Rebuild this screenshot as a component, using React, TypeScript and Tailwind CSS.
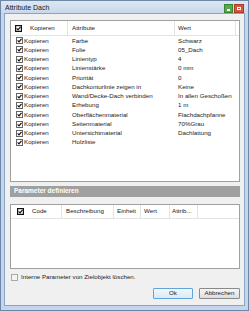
import React from "react";

const rows: [string, string][] = [
  ["Farbe", "Schwarz"],
  ["Folie", "05_Dach"],
  ["Linientyp", "4"],
  ["Linienstärke", "0 mm"],
  ["Priorität", "0"],
  ["Dachkonturlinie zeigen in", "Keine"],
  ["Wand/Decke-Dach verbinden", "In allen Geschoßen"],
  ["Erhebung", "1 m"],
  ["Oberflächenmaterial", "Flachdachpfanne"],
  ["Seitenmaterial", "70%Grau"],
  ["Untersichtmaterial", "Dachlattung"],
  ["Holzliste", ""],
];

function Check({ strong = false, checked = true }: { strong?: boolean; checked?: boolean }) {
  return (
    <svg width="7" height="7" viewBox="0 0 7 7" className="shrink-0 block">
      <rect
        x="0.5"
        y="0.5"
        width="6"
        height="6"
        fill={checked ? "#ffffff" : "#f4f4f4"}
        stroke={strong ? "#111111" : checked ? "#666666" : "#a8a8a8"}
        strokeWidth={strong ? 1.4 : 1}
      />
      {checked && (
        <path d="M1.6 3.4 L3 4.9 L5.5 1.8" fill="none" stroke="#111111" strokeWidth="1.2" />
      )}
    </svg>
  );
}

export default function App() {
  return (
    <div
      className="w-[249px] h-[311px] bg-[#c3d6ec] border border-[#6e87a6] flex flex-col text-[#222]"
      style={{ fontFamily: '"Liberation Sans", Arial, sans-serif' }}
    >
      {/* Title bar */}
      <div className="h-[12px] flex items-center pl-[4px] pr-[4px] bg-gradient-to-b from-[#dde7f2] to-[#c7d8ec]">
        <span className="text-[7px] text-[#1a1a1a] leading-none">Attribute Dach</span>
        <div className="ml-auto flex gap-[1px] mt-[2px]">
          <div className="w-[9px] h-[9px] bg-[#4fae4a] border border-[#3a8236] flex items-end justify-center pb-[1px]">
            <div className="w-[3px] h-[2px] bg-white" />
          </div>
          <div className="w-[10px] h-[9px] bg-[#d8553d] border border-[#a53b28] flex items-center justify-center">
            <div className="w-[4px] h-[3px] border border-white" />
          </div>
        </div>
      </div>

      {/* Client area */}
      <div className="mx-[3px] mb-[4px] flex-1 bg-[#f0f0f0] border border-[#8aa4c4] flex flex-col pl-[5px] pr-[4px] pt-[6px]">
        {/* First list */}
        <div className="h-[162px] bg-white border border-[#a0a0a0] flex flex-col text-[6.2px] leading-none">
          <div className="h-[15px] flex items-center border-b border-[#e3e3e3] shrink-0">
            <div className="w-[57px] h-full flex items-center pl-[4px] border-r border-[#e3e3e3]">
              <Check strong />
              <span className="ml-[8px]">Kopieren</span>
            </div>
            <div className="w-[107px] h-full flex items-center pl-[4px] border-r border-[#e3e3e3]">
              Attribute
            </div>
            <div className="w-[61px] h-full flex items-center pl-[3px] border-r border-[#e3e3e3]">
              Wert
            </div>
          </div>
          <div className="flex flex-col">
            {rows.map(([a, w]) => (
              <div key={a} className="h-[9.27px] flex items-center">
                <div className="w-[57px] flex items-center pl-[5px]">
                  <Check />
                  <span className="ml-[1px]">Kopieren</span>
                </div>
                <div className="w-[107px] pl-[4px] whitespace-nowrap overflow-hidden">{a}</div>
                <div className="pl-[3px] whitespace-nowrap">{w}</div>
              </div>
            ))}
          </div>
        </div>

        {/* Gray bar */}
        <div className="mt-[4px] h-[11px] bg-[#a0a0a0] flex items-center pl-[4px]">
          <span className="text-[6.5px] font-bold text-white leading-none">Parameter definieren</span>
        </div>

        {/* Second list */}
        <div className="mt-[7px] h-[65px] bg-white border border-[#a0a0a0] flex flex-col text-[6.2px] leading-none">
          <div className="h-[14px] flex items-center border-b border-[#e3e3e3] shrink-0">
            <div className="w-[51px] h-full flex items-center pl-[6px] border-r border-[#e3e3e3]">
              <Check strong />
              <span className="ml-[8px]">Code</span>
            </div>
            <div className="w-[52px] h-full flex items-center pl-[4px] border-r border-[#e3e3e3]">
              Beschreibung
            </div>
            <div className="w-[27px] h-full flex items-center pl-[3px] border-r border-[#e3e3e3]">
              Einheit
            </div>
            <div className="w-[29px] h-full flex items-center pl-[3px] border-r border-[#e3e3e3]">
              Wert
            </div>
            <div className="w-[28px] h-full flex items-center pl-[2px] border-r border-[#e3e3e3]">
              Attrib...
            </div>
          </div>
        </div>

        {/* Checkbox line */}
        <div className="mt-[5px] flex items-center pl-[1px] text-[6.2px] leading-none">
          <Check checked={false} />
          <span className="ml-[3px]">Interne Parameter von Zielobjekt löschen.</span>
        </div>

        {/* Buttons */}
        <div className="mt-[7px] flex justify-end gap-[6px] text-[6.2px] leading-none">
          <button className="w-[40px] h-[11px] rounded-[1px] border border-[#5fa5dc] bg-gradient-to-b from-[#f2f8fd] to-[#dbe8f3] flex items-center justify-center">
            Ok
          </button>
          <button className="w-[41px] h-[11px] rounded-[1px] border border-[#8a8a8a] bg-gradient-to-b from-[#f6f6f6] to-[#dedede] flex items-center justify-center">
            Abbrechen
          </button>
        </div>
      </div>
    </div>
  );
}
